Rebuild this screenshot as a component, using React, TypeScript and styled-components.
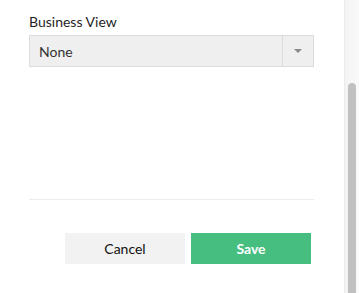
import styled, { createGlobalStyle } from 'styled-components';

const GlobalStyle = createGlobalStyle`
  html, body {
    margin: 0;
    padding: 0;
    background: #ffffff;
    font-family: Lato, "Open Sans", "Liberation Sans", sans-serif;
  }
`;

const Page = styled.div`
  display: flex;
  width: 359px;
  height: 293px;
  overflow: hidden;
`;

const Panel = styled.div`
  flex: 1;
  display: flex;
  flex-direction: column;
  padding: 13px 30px 0 29px;
`;

const Label = styled.div`
  font-size: 14px;
  line-height: 18px;
  color: #1f1f1f;
  margin-bottom: 4px;
`;

const Select = styled.div`
  display: flex;
  height: 30px;
  border: 1px solid #dcdcdc;
  background: #efefef;
  box-sizing: content-box;
`;

const SelectValue = styled.div`
  flex: 1;
  display: flex;
  align-items: center;
  padding-left: 9px;
  font-size: 14px;
  color: #333333;
`;

const SelectToggle = styled.div`
  width: 30px;
  display: flex;
  align-items: center;
  justify-content: center;
  border-left: 1px solid #dcdcdc;
`;

const Caret = styled.span`
  width: 0;
  height: 0;
  border-left: 4px solid transparent;
  border-right: 4px solid transparent;
  border-top: 4px solid #8a8a8a;
`;

const Divider = styled.div`
  height: 1px;
  background: #ececec;
  margin-top: 132px;
`;

const Actions = styled.div`
  display: flex;
  justify-content: flex-end;
  gap: 6px;
  margin-top: 33px;
  padding-right: 3px;
`;

const ActionButton = styled.button<{ $primary?: boolean }>`
  width: 120px;
  height: 31px;
  border: none;
  padding: 0;
  font-family: inherit;
  font-size: 14px;
  font-weight: ${(p) => (p.$primary ? 700 : 400)};
  color: ${(p) => (p.$primary ? '#ffffff' : '#111111')};
  background: ${(p) => (p.$primary ? '#45be7f' : '#f2f2f2')};
  cursor: pointer;
`;

const ScrollTrack = styled.div`
  width: 15px;
  display: flex;
  flex-direction: column;
  padding: 83px 3px 0 3px;
  box-sizing: border-box;
  border-left: 1px solid #ececec;
  background: linear-gradient(to right, #f3f3f3, #fafafa);
`;

const ScrollThumb = styled.div`
  flex: 1;
  background: #c1c1c1;
  border-radius: 4px 4px 0 0;
`;

export default function App() {
  return (
    <>
      <GlobalStyle />
      <Page>
        <Panel>
          <Label>Business View</Label>
          <Select>
            <SelectValue>None</SelectValue>
            <SelectToggle>
              <Caret />
            </SelectToggle>
          </Select>
          <Divider />
          <Actions>
            <ActionButton>Cancel</ActionButton>
            <ActionButton $primary>Save</ActionButton>
          </Actions>
        </Panel>
        <ScrollTrack>
          <ScrollThumb />
        </ScrollTrack>
      </Page>
    </>
  );
}
